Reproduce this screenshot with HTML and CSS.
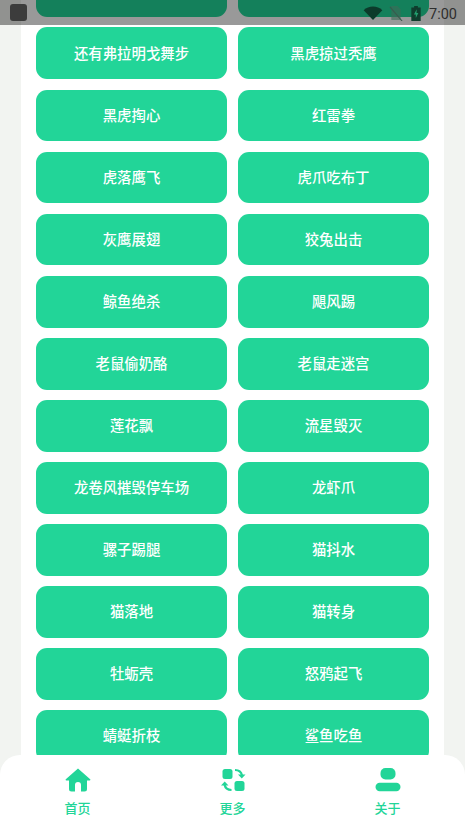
FILE: index.html
```html
<!DOCTYPE html>
<html lang="zh">
<head>
<meta charset="utf-8">
<title>招式</title>
<link rel="stylesheet" href="styles.css">
</head>
<body>
<div class="screen">
  <main class="panel">
    <div class="grid">
      <button class="move"></button><button class="move"></button>
      <button class="move">还有弗拉明戈舞步</button><button class="move">黑虎掠过秃鹰</button>
      <button class="move">黑虎掏心</button><button class="move">红雷拳</button>
      <button class="move">虎落鹰飞</button><button class="move">虎爪吃布丁</button>
      <button class="move">灰鹰展翅</button><button class="move">狡兔出击</button>
      <button class="move">鲸鱼绝杀</button><button class="move">飓风踢</button>
      <button class="move">老鼠偷奶酪</button><button class="move">老鼠走迷宫</button>
      <button class="move">莲花飘</button><button class="move">流星毁灭</button>
      <button class="move">龙卷风摧毁停车场</button><button class="move">龙虾爪</button>
      <button class="move">骡子踢腿</button><button class="move">猫抖水</button>
      <button class="move">猫落地</button><button class="move">猫转身</button>
      <button class="move">牡蛎壳</button><button class="move">怒鸦起飞</button>
      <button class="move">蜻蜓折枝</button><button class="move">鲨鱼吃鱼</button>
    </div>
  </main>

  <div class="statusbar">
    <span class="app-square"></span>
    <div class="status-right">
      <svg class="ic-wifi" viewBox="0 0 20 15"><path d="M0 4.600C2.700 1.900 6.200.6 10 .6s7.300 1.300 10 4L10 15z"/></svg>
      <svg class="ic-sim" viewBox="0 0 14 16"><path class="sim-body" d="M2 0h6.500L12 3.500V15H2z"/><path class="sim-slash" d="M0.500 1L13.500 16" /></svg>
      <svg class="ic-batt" viewBox="0 0 10 16"><path d="M3 0h4v1.500h3V16H0V1.500h3z"/><path class="bolt" d="M5.800 3.500L2.800 9h2v3.800L7.500 7.500h-2z"/></svg>
      <span class="time">7:00</span>
    </div>
  </div>

  <nav class="tabbar">
    <a class="tab">
      <svg class="tab-ic" viewBox="0 0 26 24"><path d="M13 .5L.8 11.300c-.5.500-.2 1.200.5 1.200H4v8.500A2.500 2.500 0 0 0 6.500 23.500H10v-6.500a3 3 0 0 1 6 0v6.500h3.500A2.500 2.500 0 0 0 22 21v-8.500h2.700c.7 0 1-.7.500-1.200z"/></svg>
      <span>首页</span>
    </a>
    <a class="tab">
      <svg class="tab-ic" viewBox="0 0 26 24"><rect x="2.500" y="1" width="10" height="10" rx="2.500"/><rect x="14.500" y="13" width="10" height="10" rx="2.500"/><path class="arrow" d="M15 2c3.500 0 6.300 2 7 5.500"/><path d="M18 6.500h7.500L21.800 10.500z"/><path class="arrow" d="M11.500 22c-3.500 0-6.300-2-7-5.500"/><path d="M8.500 17.500H1L4.700 13.500z"/></svg>
      <span>更多</span>
    </a>
    <a class="tab">
      <svg class="tab-ic" viewBox="0 0 26 24"><rect x="5.500" y="0" width="15" height="11.500" rx="5"/><rect x="0.500" y="14.700" width="25" height="8.500" rx="4.200"/></svg>
      <span>关于</span>
    </a>
  </nav>
</div>
</body>
</html>
```
FILE: styles.css
```css
* { box-sizing: border-box; }
html, body { margin: 0; padding: 0; }
body { font-family: "Noto Sans CJK SC", "Noto Sans", sans-serif; background: #f2f4f1; }

.screen {
  position: relative;
  width: 465px;
  height: 828px;
  overflow: hidden;
  background: #f2f4f1;
}

.panel {
  margin: -34.670px 21px 0;
  padding: 0 15px;
  background: #fff;
  height: 900px;
}

.grid {
  display: grid;
  grid-template-columns: 191px 191px;
  column-gap: 11px;
  row-gap: 10.290px;
  grid-auto-rows: 51.800px;
}

.move {
  border: 0;
  padding: 0 0 1px;
  border-radius: 11px;
  background: #22d598;
  color: #fff;
  font-family: inherit;
  font-size: 14.400px;
  font-weight: 500;
  line-height: 1;
}

.statusbar {
  position: absolute;
  top: 0;
  left: 0;
  right: 0;
  height: 25px;
  background: rgba(0, 0, 0, 0.4);
  display: flex;
  align-items: center;
  justify-content: space-between;
  padding: 0 8px 0 10px;
}

.app-square {
  width: 17px;
  height: 17px;
  border-radius: 3px;
  background: #3c3c3c;
}

.status-right {
  display: flex;
  align-items: center;
  color: #333;
}

.ic-wifi { width: 20px; height: 14px; margin-top: 1px; fill: #0c3b2b; }
.ic-sim { width: 14px; height: 15px; margin-left: 6px; margin-top: 1px; }
.sim-body { fill: #3f6a59; opacity: 0.6; }
.sim-slash { stroke: #3a5a4e; stroke-width: 1.200; fill: none; }
.ic-batt { width: 10px; height: 15px; margin-left: 8px; margin-top: 1px; fill: #0f3d2d; }
.bolt { fill: #23a070; }

.time {
  margin-left: 8px;
  margin-top: 5px;
  font-family: "Roboto", sans-serif;
  font-size: 14.500px;
  line-height: 1;
  color: #2e2e2e;
}

.tabbar {
  position: absolute;
  left: 0;
  right: 0;
  bottom: 0;
  height: 73px;
  border-radius: 20px 20px 0 0;
  background: #fff;
  display: grid;
  grid-template-columns: repeat(3, 1fr);
  padding-top: 13px;
}

.tab {
  display: flex;
  flex-direction: column;
  align-items: center;
  color: #22d598;
  font-size: 13px;
  font-weight: 500;
  line-height: 18px;
}

.tab-ic { width: 26px; height: 24px; fill: #22d598; margin-bottom: 7px; }
.arrow { fill: none; stroke: #22d598; stroke-width: 2.200; }
```
